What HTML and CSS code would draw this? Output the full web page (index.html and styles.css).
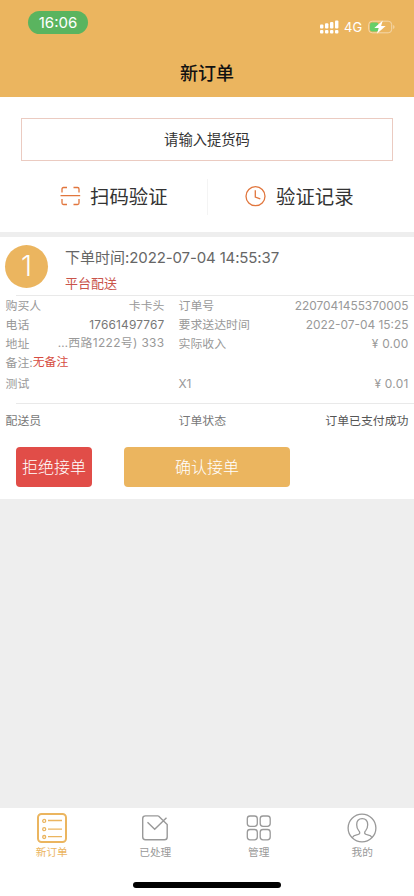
FILE: index.html
```html
<!DOCTYPE html>
<html lang="zh-CN">
<head>
<meta charset="utf-8">
<meta name="viewport" content="width=device-width, initial-scale=1">
<title>新订单</title>
<link rel="stylesheet" href="styles.css">
</head>
<body>
<div class="app">
  <header class="header">
    <div class="status">
      <span class="clock">16:06</span>
      <div class="signals">
        <svg class="cell" width="19" height="14" viewBox="0 0 19 14" fill="#fff"><rect x="0" y="4.5" width="3.4" height="4" rx="1"/><rect x="5" y="3.3" width="3.4" height="5.2" rx="1"/><rect x="10" y="2" width="3.4" height="6.5" rx="1"/><rect x="15" y=".4" width="3.4" height="8.1" rx="1"/><rect x="0" y="10" width="3.4" height="3.4" rx="1"/><rect x="5" y="10" width="3.4" height="3.4" rx="1"/><rect x="10" y="10" width="3.4" height="3.4" rx="1"/><rect x="15" y="10" width="3.4" height="3.4" rx="1"/></svg>
        <span class="network">4G</span>
        <svg class="battery" width="27" height="14" viewBox="0 0 27 14"><rect x=".7" y="1.2" width="23" height="11.6" rx="3.5" fill="none" stroke="#f4d7aa"/><path d="M25.2 5v4q1.300-.6 1.300-2t-1.300-2z" fill="#f4d7aa"/><rect x="2" y="2.600" width="8.500" height="8.800" rx="2" fill="#65cf68"/><path d="M14.800.5 6.300 8h4.500l-2 5.800L17.700 5.900h-4.600z" fill="#fff"/></svg>
      </div>
    </div>
    <h1 class="title">新订单</h1>
  </header>

  <section class="verify">
    <div class="code-input">请输入提货码</div>
    <div class="actions">
      <div class="action">
        <svg width="21" height="21" viewBox="0 0 21 21" fill="none" stroke="#e1763d" stroke-width="1.300"><path d="M2 6.500V3q0-1.500 1.500-1.500h3.500M13.500 1.500h4q1.500 0 1.500 1.500v3.500M2 13v4q0 1.500 1.500 1.500h3.500M13.500 18.500h4q1.500 0 1.500-1.500v-4M.5 9.600h19.700"/></svg>
        <span>扫码验证</span>
      </div>
      <div class="action action-right">
        <svg width="21" height="21" viewBox="0 0 21 21" fill="none" stroke="#e1763d" stroke-width="1.300"><circle cx="10.500" cy="10.200" r="9.500"/><path d="M10.300 4.200v6.800l5 1.800"/></svg>
        <span>验证记录</span>
      </div>
    </div>
  </section>

  <section class="order">
    <div class="order-head">
      <div class="number">1</div>
      <div class="order-info">
        <div class="order-time">下单时间:<span class="stamp">2022-07-04 14:55:37</span></div>
        <div class="delivery">平台配送</div>
      </div>
    </div>
    <div class="rule"></div>
    <div class="details">
      <div class="row"><span>购买人</span><span>卡卡头</span><span>订单号</span><span class="num">2207041455370005</span></div>
      <div class="row"><span>电话</span><span class="phone">17661497767</span><span>要求送达时间</span><span class="num time">2022-07-04 15:25</span></div>
      <div class="row"><span>地址</span><span class="address">…西路1222号) 333</span><span>实际收入</span><span class="num price">¥ 0.00</span></div>
      <div class="note"><span>备注:</span><b>无备注</b></div>
      <div class="row item"><span>测试</span><span></span><span>X1</span><span class="num price">¥ 0.01</span></div>
    </div>
    <div class="rule"></div>
    <div class="row state"><span>配送员</span><span></span><span>订单状态</span><span class="paid">订单已支付成功</span></div>
    <div class="buttons">
      <div class="button reject">拒绝接单</div>
      <div class="button accept">确认接单</div>
    </div>
  </section>

  <nav class="tabs">
    <div class="tab active">
      <svg width="32" height="32" viewBox="0 0 32 32" fill="none" stroke="currentColor" stroke-width="1.300"><rect x="2" y="2" width="28" height="28" rx="3.500" stroke-width="2"/><circle cx="8.200" cy="8.900" r="1.500"/><circle cx="8.200" cy="17.200" r="1.500"/><circle cx="8.200" cy="25" r="1.500"/><path d="M12 8.500h14M12 17.200h14M12 24.700h14"/></svg>
      <span>新订单</span>
    </div>
    <div class="tab">
      <svg width="32" height="32" viewBox="0 0 32 32" fill="none" stroke="currentColor" stroke-width="1.400"><path d="M19.500 3.900H6.500Q3.700 3.900 3.700 6.700v18Q3.700 27.800 6.500 27.800h19Q28.200 27.800 28.200 25V12.500L19.500 3.900M8.500 10.300l7.200 7L27.500 5.700"/></svg>
      <span>已处理</span>
    </div>
    <div class="tab">
      <svg width="32" height="32" viewBox="0 0 32 32" fill="none" stroke="currentColor" stroke-width="1.300"><rect x="4.300" y="4" width="10" height="10.300" rx="2.800"/><rect x="17.200" y="4" width="10" height="10.300" rx="2.800"/><rect x="4.300" y="17.500" width="10" height="10.300" rx="2.800"/><rect x="17.200" y="17.500" width="10" height="10.300" rx="2.800"/></svg>
      <span>管理</span>
    </div>
    <div class="tab">
      <svg width="32" height="32" viewBox="0 0 32 32" fill="none" stroke="currentColor" stroke-width="1.300"><circle cx="16" cy="16" r="13.900"/><path d="M6.200 25.700q1.300-2.400 4.500-2.900 3.300-.4 3-2.300-.1-1-1-1.900-2-2.200-2-5.800 0-6.200 5.500-6.200t5.500 6.200q0 3.600-2 5.800-.9.900-1 1.900-.3 1.900 3 2.300 3.200.5 4.500 2.900"/></svg>
      <span>我的</span>
    </div>
  </nav>
  <div class="home"><div class="home-bar"></div></div>
</div>
</body>
</html>
```
FILE: styles.css
```css
* { box-sizing: border-box; }
body {
  margin: 0;
  background: #eee;
  font-family: Inter, "Noto Sans CJK SC", sans-serif;
  color: #999;
}
svg { display: block; flex: none; }
.app {
  width: 414px;
  height: 896px;
  display: flex;
  flex-direction: column;
  overflow: hidden;
}
.header {
  height: 97px;
  flex: none;
  background: #ebb55f;
}
.status {
  display: flex;
  justify-content: space-between;
  padding: 11px 19px 0 28px;
  height: 50px;
}
.clock {
  width: 60px;
  height: 23px;
  border-radius: 12px;
  background: #5ab45f;
  color: #fff;
  font-size: 15px;
  font-weight: 400;
  line-height: 23px;
  text-align: center;
}
.signals {
  display: flex;
  align-items: center;
  height: 31px;
  color: #fff;
}
.network {
  width: 29px;
  padding-left: 5px;
  font-size: 13px;
  font-weight: 400;
}
.title {
  margin: 0;
  padding-top: 10px;
  color: #111;
  font-size: 18px;
  font-weight: 500;
  line-height: 27px;
  text-align: center;
}
.verify {
  height: 135px;
  flex: none;
  padding: 21px 21px 0;
  background: #fff;
}
.code-input {
  height: 43px;
  border: 1px solid #ebcbc1;
  color: #333;
  font-size: 14.300px;
  line-height: 41px;
  text-align: center;
}
.actions {
  display: flex;
  margin-top: 18px;
  height: 36px;
}
.action {
  display: flex;
  align-items: center;
  gap: 9px;
  width: 186px;
  padding-left: 39px;
  color: #333;
  font-size: 19.400px;
  line-height: 30px;
}
.action svg { margin-bottom: 1px; }
.action-right { gap: 10px; border-left: 1px solid #f4f4f4; padding-left: 37px; }
.order {
  height: 262px;
  flex: none;
  margin-top: 5px;
  background: #fff;
}
.order-head {
  display: flex;
  height: 58px;
  padding: 8px 5px 0;
  gap: 17px;
}
.number {
  width: 43px;
  height: 43px;
  border-radius: 50%;
  background: #ebb55f;
  color: #fff;
  font-size: 28px;
  font-weight: 300;
  line-height: 43px;
  text-align: center;
}
.order-time {
  height: 27px;
  color: #666;
  font-size: 15px;
  line-height: 25px;
  white-space: nowrap;
}
.stamp { letter-spacing: -0.130px; }
.delivery {
  color: #c9544a;
  font-size: 13px;
  line-height: 22px;
}
.rule { height: 1px; margin-left: 16px; background: #e9e9e9; }
.row {
  display: grid;
  grid-template-columns: 50px 109px 80px 1fr;
  height: 19px;
  padding: 0 5.500px;
  font-size: 11.900px;
  line-height: 19px;
  white-space: nowrap;
}
.row > :nth-child(2), .row > :nth-child(4) { text-align: right; }
.row > :nth-child(3) { padding-left: 14px; }
.row > .phone { color: #777; letter-spacing: .170px; }
.row > .address { letter-spacing: .350px; line-height: 17px; }
.price { letter-spacing: .250px; }
.note { display: flex; height: 19px; padding-left: 5.500px; font-size: 11.900px; line-height: 19px; }
.note b { color: #d64c41; font-weight: 400; line-height: 17px; }
.item { height: 31px; line-height: 23px; }
.state { height: 43px; color: #777; line-height: 33px; }
.paid { color: #555; }
.buttons { display: flex; gap: 32px; padding-left: 16px; }
.button {
  height: 40px;
  border-radius: 4px;
  color: #fff;
  font-size: 16px;
  font-weight: 300;
  line-height: 40px;
  text-align: center;
}
.reject { width: 76px; background: #e14d48; }
.accept { width: 166px; background: #ebb55f; }
.tabs {
  display: flex;
  height: 66px;
  flex: none;
  margin-top: auto;
  background: #fff;
}
.tab {
  display: flex;
  flex: 1;
  flex-direction: column;
  align-items: center;
  padding-top: 4px;
  font-size: 10.700px;
  line-height: 17px;
}
.active { color: #ebb55f; }
.home {
  height: 22px;
  flex: none;
  padding-top: 8px;
  background: #fff;
}
.home-bar {
  width: 148px;
  height: 6px;
  margin: 0 auto;
  border-radius: 3px;
  background: #000;
}
```
